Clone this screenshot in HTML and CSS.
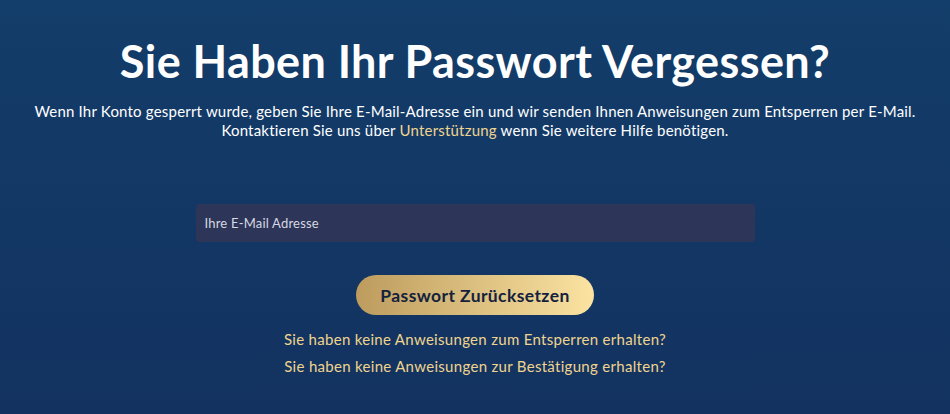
FILE: index.html
```html
<!DOCTYPE html>
<html lang="de">
  <head>
    <meta charset="UTF-8" />
    <meta name="viewport" content="width=device-width, initial-scale=1.0" />
    <title>Passwort vergessen</title>
    <link rel="stylesheet" href="styles.css">
  </head>
  <body>
    <div class="reset-page">
      <h1 class="title">Sie Haben Ihr Passwort Vergessen?</h1>
      <p class="intro">
        Wenn Ihr Konto gesperrt wurde, geben Sie Ihre E-Mail-Adresse ein und wir senden Ihnen Anweisungen zum Entsperren per E-Mail.<br />
        Kontaktieren Sie uns über <a href="#" class="gold-link">Unterstützung</a> wenn Sie weitere Hilfe benötigen.
      </p>
      <form class="reset-form">
        <input class="email-input" type="email" placeholder="Ihre E-Mail Adresse" />
        <button class="reset-btn" type="button">Passwort Zurücksetzen</button>
      </form>
      <div class="help-links">
        <a href="#" class="gold-link">Sie haben keine Anweisungen zum Entsperren erhalten?</a>
        <a href="#" class="gold-link">Sie haben keine Anweisungen zur Bestätigung erhalten?</a>
      </div>
    </div>
  </body>
</html>
```

FILE: styles.css
```css
/* Seite */
html,
body {
  height: 100%;
}

body {
  margin: 0;
  font-family: Lato, "Open Sans", sans-serif;
  background: linear-gradient(180deg, #133d6a 0%, #133260 100%);
  color: #ffffff;
}

.reset-page {
  display: flex;
  flex-direction: column;
  align-items: center;
  padding-top: 33px;
}

.title {
  margin: 0;
  font-size: 45px;
  font-weight: 700;
  line-height: 56px;
  letter-spacing: 0.4px;
}

.intro {
  margin: 13px 0 0;
  font-size: 15px;
  line-height: 19px;
  letter-spacing: 0.2px;
  text-align: center;
}

.gold-link {
  color: #f0d48e;
  text-decoration: none;
}

.reset-form {
  display: flex;
  flex-direction: column;
  align-items: center;
  margin-top: 64px;
}

.email-input {
  box-sizing: border-box;
  width: 559px;
  height: 38px;
  padding: 0 9px;
  border: none;
  border-radius: 3px;
  background-color: #2d3558;
  color: #ffffff;
  font-family: inherit;
  font-size: 13px;
  letter-spacing: 0.2px;
}

.email-input::placeholder {
  color: #d6d8e2;
}

.reset-btn {
  margin-top: 33px;
  width: 238px;
  height: 40px;
  border: none;
  border-radius: 20px;
  background: linear-gradient(90deg, #bd9c5e 0%, #fbe3a2 100%);
  color: #14213d;
  font-family: inherit;
  font-size: 17.5px;
  font-weight: 700;
  letter-spacing: 0.4px;
  cursor: pointer;
}

.help-links {
  display: flex;
  flex-direction: column;
  align-items: center;
  gap: 8px;
  margin-top: 15px;
  font-size: 15px;
  line-height: 19px;
  letter-spacing: 0.3px;
}
```
